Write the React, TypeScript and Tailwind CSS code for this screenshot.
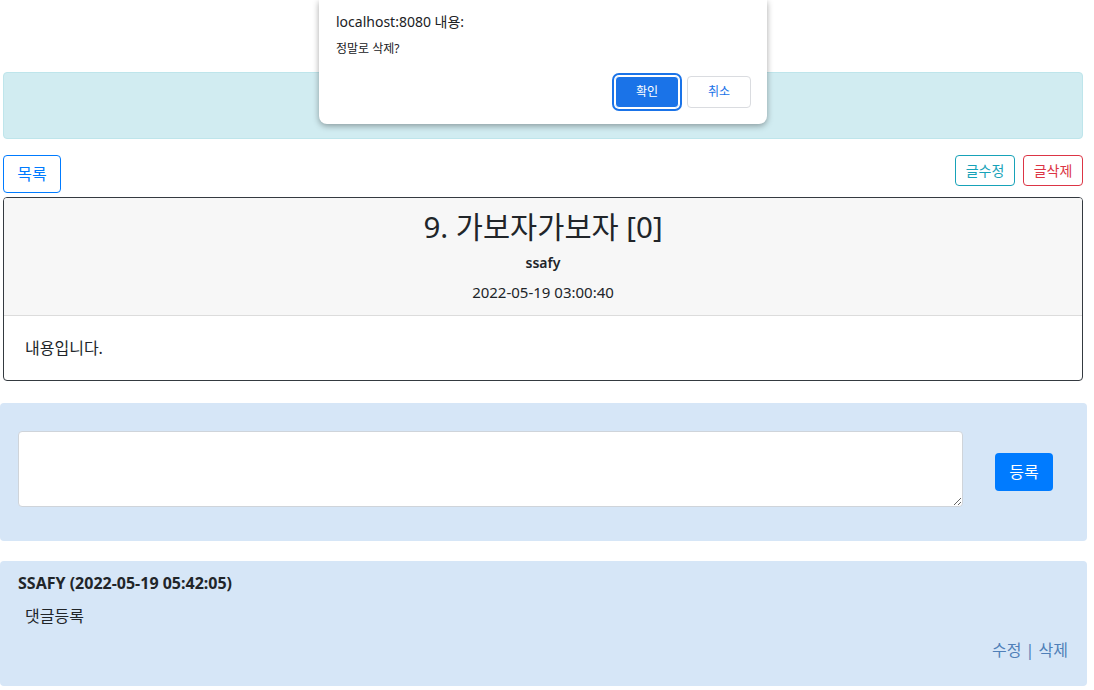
import React from "react";

export default function App() {
  const font = { fontFamily: '"Noto Sans", "Noto Sans CJK KR", sans-serif' };
  return (
    <div className="relative w-[1094px] h-[690px] bg-white overflow-hidden text-[#212529]" style={font}>
      <div className="pt-[72px] pl-[3px] pr-[11px]">
        <div className="h-[67px] rounded bg-[#d1ecf1] border border-[#bee5eb]" />
        <div className="mt-[16px] flex items-start justify-between">
          <button className="h-[38px] w-[58px] rounded border border-[#007bff] text-[#007bff] text-[16px] leading-none">목록</button>
          <div className="flex gap-2">
            <button className="h-[31px] w-[60px] rounded border border-[#17a2b8] text-[#17a2b8] text-[14px] leading-none">글수정</button>
            <button className="h-[31px] w-[60px] rounded border border-[#dc3545] text-[#dc3545] text-[14px] leading-none">글삭제</button>
          </div>
        </div>
        <div className="mt-[4px] h-[184px] rounded border border-[#343a40] overflow-hidden flex flex-col">
          <div className="h-[118px] bg-[#f7f7f7] border-b border-[#dcdcdc] flex flex-col items-center pt-[9px]">
            <div className="text-[29.5px] leading-[40px]">9. 가보자가보자 [0]</div>
            <div className="text-[14px] font-semibold leading-[20px] mt-[6px]">ssafy</div>
            <div className="text-[15px] leading-[20px] mt-[9px]">2022-05-19 03:00:40</div>
          </div>
          <div className="px-[21px] pt-[20px] text-[16px] leading-[24px]">내용입니다.</div>
        </div>
      </div>
      <div className="mt-[22px] w-[1087px] h-[138px] rounded bg-[#d6e6f7] flex items-start pl-[18px] pt-[28px]">
        <textarea className="w-[945px] h-[76px] bg-white border border-[#cfd4da] rounded resize-y" />
        <button className="ml-[32px] mt-[22px] h-[38px] w-[58px] rounded bg-[#007bff] text-white text-[16px]">등록</button>
      </div>
      <div className="mt-[20px] w-[1087px] h-[125px] rounded bg-[#d6e6f7] px-[18px] pt-[11px] flex flex-col">
        <div className="text-[16px] font-bold leading-[22px]">SSAFY (2022-05-19 05:42:05)</div>
        <div className="pl-[7px] mt-[11px] text-[16px] leading-[22px]">댓글등록</div>
        <div className="mt-[12px] text-right pr-[1px] text-[16px] leading-[22px] text-[#4f7fb8]">수정 | 삭제</div>
      </div>

      <div className="absolute left-[319px] top-0 w-[448px] h-[124px] bg-white rounded-b-lg shadow-[0_2px_6px_rgba(0,0,0,0.35)]">
        <div className="pl-[17px] pt-[12px] text-[14px] leading-[20px] text-[#202124]">localhost:8080 내용:</div>
        <div className="pl-[17px] mt-[8px] text-[12px] leading-[18px] text-[#202124]">정말로 삭제?</div>
        <div className="flex justify-end gap-[8px] pr-[16px] mt-[18px]">
          <button className="h-[32px] w-[64px] rounded bg-[#1a73e8] text-white text-[12px] ring-2 ring-[#1a73e8] ring-offset-1 border border-white">확인</button>
          <button className="h-[32px] w-[64px] rounded bg-white border border-[#dadce0] text-[#1a73e8] text-[12px]">취소</button>
        </div>
      </div>
    </div>
  );
}
